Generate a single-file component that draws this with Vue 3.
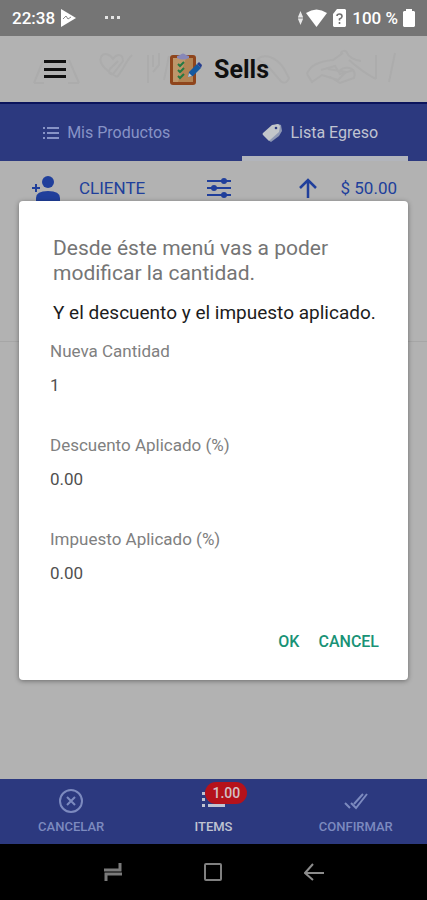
<template>
  <div class="app">
    <div class="status-bar">
      <span>22:38</span>
      <svg class="play" width="17" height="20" viewBox="0 0 17 20">
        <path d="M1 1v18l15-9z" fill="#fff" />
        <path d="M3 11l3-3 2 3 3-2" fill="none" stroke="#888" />
      </svg>
      <svg width="16" height="4" viewBox="0 0 16 4" fill="#e4e4e4">
        <path d="M0 0h3v3H0zM6 0h3v3H6zM12 0h3v3h-3z" />
      </svg>
      <div class="status-right">
        <svg width="7" height="16" viewBox="0 0 7 16" fill="#e8e8e8">
          <path d="M3.500 1L6 7H1zM3.500 15L1 9h5z" />
          <path d="M1 7h5v2H1z" fill="#b4b4b4" />
        </svg>
        <svg class="wifi" width="21" height="18" viewBox="0 0 21 18">
          <path d="M0 4Q10.500-3 21 4L10.500 18z" fill="#fff" />
        </svg>
        <svg class="sim" width="13" height="18" viewBox="0 0 13 18">
          <path d="M4 0h8l1 1v16l-1 1H1l-1-1V5z" fill="#fff" />
          <path d="M4 7q0-2 2.500-2T9 7.500Q9 9 6.500 10v1.500M6.500 13v2" fill="none" stroke="#707070" stroke-width="1.600" />
        </svg>
        <span class="percent">100 %</span>
        <svg width="12" height="18" viewBox="0 0 12 18">
          <path d="M3 0h6v2h2l1 1v14l-1 1H1l-1-1V3l1-1h2z" fill="#fff" />
        </svg>
      </div>
    </div>

    <header class="header">
      <svg class="sketches" viewBox="0 0 427 66" preserveAspectRatio="xMidYMid slice" fill="none" stroke="#acacac" stroke-width="2">
        <path d="M34 47l9-22M79 47L69 24M34 47h10M68 47h11" />
        <path d="M117 41c-8-5-19-12-16-20 3-5 9-3 12 2 4-6 10-5 10 2l-10 13c-5 1-5-4-1-7l6-6M117 41c6-7 9-16 15-22" />
        <path d="M148 19v28M153 19v12M159 17v12l-6 7M164 44l5-24" />
        <path d="M257 23c8-6 18-2 26 8l6 11c-2 6-7 6-10 1l-12-14-10-6" />
        <path d="M307 38c3-9 14-13 26-14l10-7M307 38l5 8 10-7 16 5 8-8-18-3M340 34c8-5 17-1 14 8l-14 5-10-6M349 24c9 8 17 14 27 19M376 43V19M389 46l6-29" />
        <path d="M341 18c0-4 5-4 6-1s8 8 14 8M321 34l14-4 5 8 14-4" />
      </svg>
      <button class="menu" type="button" aria-label="Menú">
        <svg width="22" height="20" viewBox="0 0 22 20" fill="#101010">
          <path d="M0 1h22v3H0zM0 9h22v3H0zM0 16h22v3H0z" />
        </svg>
      </button>
      <div class="brand">
        <svg width="32" height="34" viewBox="0 0 32 34">
          <rect x="0" y="3" width="26" height="30" rx="3" fill="#8f451c" />
          <path d="M3 6h20v24H3z" fill="#bd966a" />
          <path d="M16 6h7v24H8z" fill="#b28454" />
          <path d="M7 6V4l3-1q3-3 6 0l3 1v2q-6 3-12 0z" fill="#8787b8" />
          <path d="M8 12l2 2 4-4M8 18l2 2 4-4M8 24l2 2 4-4" fill="none" stroke="#237a43" stroke-width="2" />
          <path d="M18 25l1-5 8-8 4 4-8 8z" fill="#1459a0" />
          <path d="M27 12l2-2 3 3-1 3z" fill="#263d8d" />
          <path d="M18 25l1-4 3 3z" fill="#c4ccd4" />
        </svg>
        <h1>Sells</h1>
      </div>
    </header>

    <nav class="tabs">
      <a class="tab" href="#productos">
        <svg width="16" height="12" viewBox="0 0 16 12" fill="#8793c6">
          <path d="M0 0h2v2H0zM4 0h12v2H4zM0 5h2v2H0zM4 5h12v2H4zM0 10h2v2H0zM4 10h12v2H4z" />
        </svg>
        Mis Productos
      </a>
      <a class="tab active" href="#egreso">
        <svg width="20" height="18" viewBox="0 0 20 18">
          <path d="M10 2l6-2 3 1 1 6-3 5-8 6-3-2z" fill="#8e98b4" />
          <path d="M1 9l9-8 6-1 2 2-1 6-9 8q-1 1-2 0l-5-5q-1-1 0-2z" fill="#c2c6ca" />
          <circle cx="14" cy="4" r="1.300" fill="#2c397f" />
        </svg>
        Lista Egreso
      </a>
    </nav>

    <main class="content">
      <div class="toolbar">
        <button class="client" type="button">
          <svg width="28" height="26" viewBox="0 0 28 26" fill="#203f9b">
            <circle cx="16" cy="7" r="6" />
            <path d="M4 26v-3q0-7 12-7t12 7v3zM3 9h2v3h3v2H5v3H3v-3H0v-2h3z" />
          </svg>
          CLIENTE
        </button>
        <button type="button" aria-label="Filtros">
          <svg width="24" height="20" viewBox="0 0 24 20" fill="#203f9b">
            <path d="M0 2h24v2H0zM0 9h24v2H0zM0 16h24v2H0z" />
            <circle cx="17" cy="3" r="3" />
            <circle cx="7" cy="10" r="3" />
            <circle cx="17" cy="17" r="3" />
          </svg>
        </button>
        <button class="total" type="button">
          <svg width="18" height="20" viewBox="0 0 18 20" fill="none" stroke="#203f9b" stroke-width="2.500">
            <path d="M9 20V2M1 10l8-8 8 8" />
          </svg>
          $ 50.00
        </button>
      </div>
      <div class="list-row"></div>
    </main>

    <nav class="actions">
      <button type="button">
        <svg width="24" height="24" viewBox="0 0 24 24" fill="none" stroke="#7c8abf" stroke-width="2">
          <circle cx="12" cy="12" r="11" />
          <path d="M8 8l8 8M16 8l-8 8" />
        </svg>
        CANCELAR
      </button>
      <button class="current" type="button">
        <span class="items-icon">
          <svg width="24" height="24" viewBox="0 0 24 24" fill="#c0c4d2">
            <path d="M1 3h3v3H1zM1 9h3v3H1zM1 15h3v3H1zM7 3h17v3H7zM7 9h17v3H7zM7 15h17v3H7z" />
          </svg>
          <span class="badge">1.00</span>
        </span>
        ITEMS
      </button>
      <button type="button">
        <svg width="24" height="24" viewBox="0 0 24 24" fill="none" stroke="#7c8abf" stroke-width="2">
          <path d="M1 14l5 5M7 14l5 5L23 5M10 15l9-10" />
        </svg>
        CONFIRMAR
      </button>
    </nav>

    <div class="system-nav">
      <button type="button" aria-label="Recientes">
        <svg width="18" height="18" viewBox="0 0 18 18" fill="none" stroke="#7a7a7a" stroke-width="3">
          <path d="M0 7h16V0M18 11H2v7" />
        </svg>
      </button>
      <button type="button" aria-label="Inicio">
        <svg width="18" height="18" viewBox="0 0 18 18" fill="none" stroke="#808080" stroke-width="2">
          <rect x="1" y="1" width="16" height="16" rx="1" />
        </svg>
      </button>
      <button type="button" aria-label="Atrás">
        <svg width="20" height="18" viewBox="0 0 20 18" fill="none" stroke="#8c8c8c" stroke-width="2">
          <path d="M20 10H2M9 1L1 10l8 7" />
        </svg>
      </button>
    </div>

    <div class="overlay">
      <form class="dialog" role="dialog" aria-labelledby="dialog-title" @submit.prevent>
        <h2 id="dialog-title">Desde éste menú vas a poder modificar la cantidad.</h2>
        <p>Y el descuento y el impuesto aplicado.</p>
        <div class="fields">
          <div v-for="field in fields" :key="field.id" class="field">
            <label :for="field.id">{{ field.label }}</label>
            <input :id="field.id" v-model="field.value" type="text" inputmode="decimal" />
          </div>
        </div>
        <div class="dialog-buttons">
          <button type="submit">OK</button>
          <button type="button">CANCEL</button>
        </div>
      </form>
    </div>
  </div>
</template>

<script setup>
import { ref } from 'vue'

const fields = ref([
  { id: 'cantidad', label: 'Nueva Cantidad', value: '1' },
  { id: 'descuento', label: 'Descuento Aplicado (%)', value: '0.00' },
  { id: 'impuesto', label: 'Impuesto Aplicado (%)', value: '0.00' },
])
</script>

<style>
body {
  margin: 0;
  background: #b2b2b2;
}
</style>

<style scoped>
.app {
  position: relative;
  display: flex;
  flex-direction: column;
  min-height: 100vh;
  background: #b2b2b2;
  font-family: Roboto, "Liberation Sans", sans-serif;
}

.app * {
  box-sizing: border-box;
}

svg {
  display: block;
  flex: none;
}

button {
  display: flex;
  align-items: center;
  padding: 0;
  border: 0;
  background: none;
  color: inherit;
  font: inherit;
}

.status-bar {
  display: flex;
  align-items: center;
  height: 36px;
  padding: 0 12px;
  background: #757575;
  color: #fff;
  font-size: 17px;
  font-weight: 500;
}

.play {
  margin: 0 28px 0 5px;
}

.status-right {
  display: flex;
  align-items: center;
  margin-left: auto;
}

.wifi {
  margin: 0 6px 0 2px;
}

.percent {
  margin: 0 5px 0 6px;
}

.header {
  position: relative;
  display: flex;
  align-items: center;
  height: 66px;
  padding: 0 44px;
}

.sketches {
  position: absolute;
  inset: 0;
  width: 100%;
  height: 100%;
}

.menu,
.brand {
  position: relative;
}

.brand {
  display: flex;
  align-items: center;
  gap: 12px;
  margin-left: 104px;
}

.brand h1 {
  margin: 0;
  color: #101010;
  font-size: 25px;
  font-weight: 700;
}

.tabs {
  display: grid;
  grid-template-columns: 1fr 1fr;
  height: 59px;
  border-top: 2px solid #0b145c;
  background: #2c397f;
}

.tab {
  position: relative;
  display: flex;
  align-items: center;
  justify-content: center;
  gap: 8px;
  color: #8793c6;
  font-size: 16px;
  text-decoration: none;
}

.tab.active {
  color: #c0c4d2;
}

.tab.active::after {
  content: '';
  position: absolute;
  right: 19px;
  bottom: 0;
  left: 28px;
  height: 5px;
  background: #b2b5bc;
}

.content {
  flex: 1;
}

.toolbar {
  display: flex;
  align-items: center;
  gap: 62px;
  height: 54px;
  padding: 0 30px 0 32px;
  color: #203f9b;
  font-size: 17px;
}

.client {
  gap: 19px;
}

.total {
  gap: 24px;
  margin-left: auto;
}

.list-row {
  height: 127px;
  border-bottom: 1px solid #a6a6a6;
}

.actions {
  display: grid;
  grid-template-columns: 1fr 1fr 1fr;
  height: 65px;
  background: #2c397f;
  color: #7c8abf;
  font-size: 13px;
  font-weight: 500;
}

.actions button {
  flex-direction: column;
  justify-content: center;
  gap: 6px;
}

.actions .current {
  color: #c0c4d2;
}

.items-icon {
  position: relative;
}

.badge {
  position: absolute;
  top: -7px;
  left: 4px;
  padding: 0 7px;
  border-radius: 11px;
  background: #b5121b;
  color: #d2c0c6;
  font-size: 14px;
  line-height: 22px;
}

.system-nav {
  display: grid;
  grid-template-columns: 1fr 1fr 1fr;
  height: 56px;
  padding: 0 63px;
  background: #000;
}

.system-nav button {
  justify-content: center;
}

.overlay {
  position: absolute;
  inset: 0;
  display: flex;
  align-items: center;
  padding: 0 19px 19px;
}

.dialog {
  flex: 1;
  padding: 35px 29px 19px 31px;
  border-radius: 4px;
  background: #fff;
  box-shadow: 0 1px 5px rgba(0, 0, 0, 0.4);
}

.dialog h2 {
  margin: 0 0 15px;
  padding: 0 3px;
  color: #757575;
  font-size: 21px;
  font-weight: 400;
  line-height: 25px;
}

.dialog p {
  margin: 0 0 16px;
  padding-left: 3px;
  color: #1c1c1c;
  font-size: 19px;
  line-height: 24px;
  white-space: nowrap;
}

.fields {
  display: flex;
  flex-direction: column;
  gap: 40px;
}

.field {
  display: flex;
  flex-direction: column;
  gap: 14px;
  color: #808080;
  font-size: 17px;
  line-height: 20px;
}

.field input {
  height: 20px;
  padding: 0;
  border: 0;
  outline: 0;
  background: none;
  color: #505050;
  font: inherit;
}

.dialog-buttons {
  display: flex;
  justify-content: flex-end;
  gap: 19px;
  margin-top: 38px;
}

.dialog-buttons button {
  height: 40px;
  color: #199276;
  font-size: 16px;
  font-weight: 500;
}
</style>
